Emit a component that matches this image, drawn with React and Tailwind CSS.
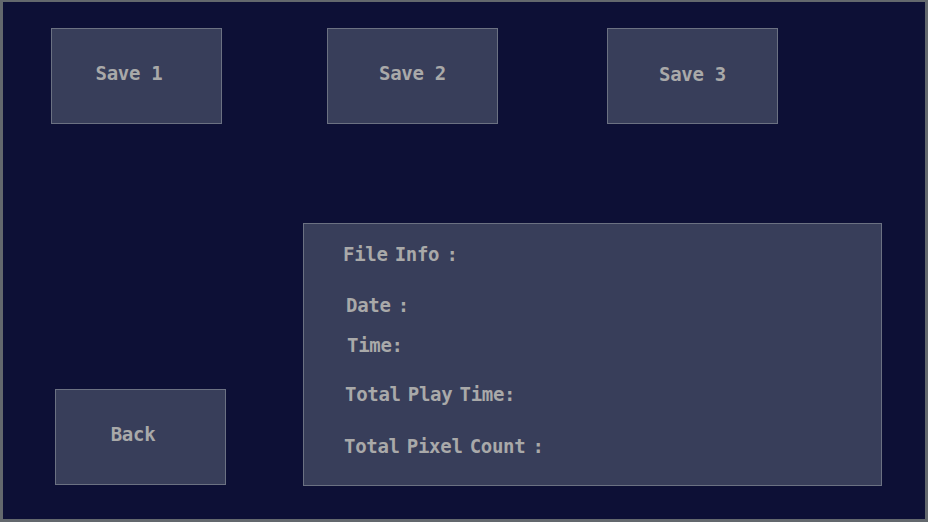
import React from 'react';

const font = { fontFamily: '"DejaVu Sans Mono", "Liberation Mono", monospace', wordSpacing: '-4px' };

function SlotButton({ label, className = '' }) {
  return (
    <button
      type="button"
      className={`flex h-[96px] w-[171px] shrink-0 items-center justify-center border border-[#6b7182] bg-[#383e5a] text-[19px] font-bold tracking-[-0.3px] text-[#a9a9a9] ${className}`}
    >
      {label}
    </button>
  );
}

export default function App() {
  const lines = [
    { text: 'File Info :', cls: 'mt-[21px] ml-0' },
    { text: 'Date :', cls: 'mt-[31px] ml-[3px]' },
    { text: 'Time:', cls: 'mt-[20px] ml-[4px]' },
    { text: 'Total Play Time:', cls: 'mt-[29px] ml-[2px]' },
    { text: 'Total Pixel Count :', cls: 'mt-[32px] ml-[1px]' },
  ];

  return (
    <div
      style={font}
      className="flex h-[522px] w-[928px] flex-col border-x-[3px] border-t-2 border-b-[3px] border-[#63686d] bg-[#0d1036]"
    >
      <div className="flex pt-[26px]">
        <SlotButton label="Save 1" className="ml-[48px] pr-[15px] pb-[6px]" />
        <SlotButton label="Save 2" className="ml-[105px] pb-[6px]" />
        <SlotButton label="Save 3" className="ml-[109px] pb-[4px]" />
      </div>

      <div className="mt-[99px] flex items-end">
        <SlotButton label="Back" className="mb-[1px] ml-[52px] pr-[15px] pb-[6px]" />
        <div className="ml-[77px] flex h-[263px] w-[579px] flex-col border border-[#6b7182] bg-[#383e5a] pl-[39px]">
          {lines.map((l) => (
            <div
              key={l.text}
              className={`h-[20px] text-[19px] font-bold leading-[18px] tracking-[-0.3px] text-[#a9a9a9] ${l.cls}`}
            >
              {l.text}
            </div>
          ))}
        </div>
      </div>
    </div>
  );
}
